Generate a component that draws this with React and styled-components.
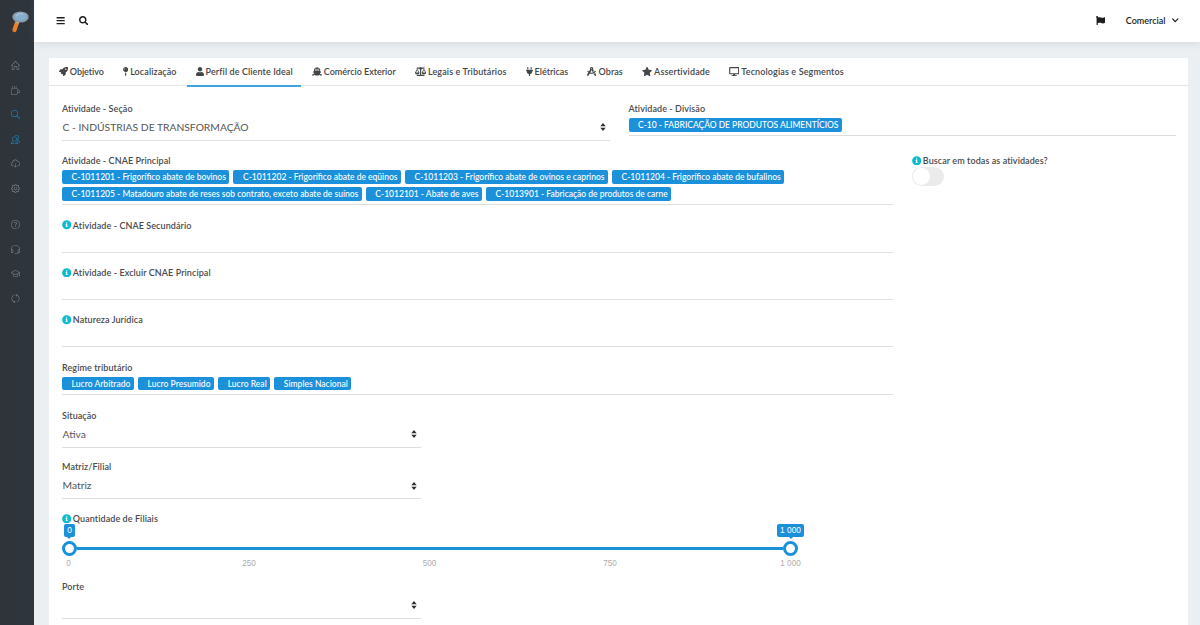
import React from 'react';
import styled, { createGlobalStyle, css } from 'styled-components';
import {
  FaBalanceScale, FaBars, FaDesktop, FaDraftingCompass, FaFlag, FaInfoCircle,
  FaMapPin, FaPlug, FaRocket, FaSearch, FaShip, FaStar, FaUser,
} from 'react-icons/fa';
import {
  SlCloudDownload, SlCup, SlEarphonesAlt, SlGraduation, SlHome, SlMagnifier,
  SlPeople, SlQuestion, SlRefresh, SlSettings,
} from 'react-icons/sl';
import { FiChevronDown } from 'react-icons/fi';

const blue = '#1b91dc';

const Global = createGlobalStyle`
  *, *::before, *::after { box-sizing: border-box; }
  html, body { margin: 0; height: 100%; overflow: hidden; }
  body {
    background: #ebeff2;
    color: #4a4b4d;
    font-family: Lato, "Liberation Sans", sans-serif;
    font-size: 9px;
  }
`;

const Page = styled.div`
  display: flex;
  height: 625px;
  overflow: hidden;
`;

const Sidebar = styled.aside`
  display: flex;
  flex-direction: column;
  align-items: center;
  flex: none;
  width: 34px;
  padding: 11px 3px 0 0;
  background: linear-gradient(90deg, #2f343b, #2e353c);
`;

const Logo = styled.svg`
  width: 20px;
  height: 22px;
  margin: 0 0 28px 6px;
`;

const NavGroup = styled.nav`
  display: flex;
  flex-direction: column;
  gap: 15.6px;
  margin-bottom: 27px;
`;

const NavItem = styled.a`
  display: flex;
  font-size: 9px;
  color: ${(p) => (p.$active ? '#1d90d2' : '#7c8085')};
`;

const Main = styled.main`
  display: flex;
  flex-direction: column;
  flex: 1;
  min-width: 0;
`;

const TopBar = styled.header`
  display: flex;
  align-items: center;
  justify-content: space-between;
  flex: none;
  height: 42px;
  padding: 0 20px 1px 21.5px;
  background: #fff;
  box-shadow: 0 1px 8px rgba(110, 125, 140, 0.2);
  color: #1d1e20;
`;

const TopGroup = styled.div`
  display: flex;
  align-items: center;
  gap: ${(p) => p.$gap}px;
  font-size: 9.3px;
`;

const UserMenu = styled.div`
  display: flex;
  align-items: center;
  gap: 4.5px;
  font-size: 9px;
  font-weight: 600;

  svg { font-size: 10.5px; stroke-width: 2.8; margin-right: -0.5px; }
`;

const Card = styled.section`
  flex: 1;
  margin: 16px 12px 0 15px;
  background: #fff;
`;

const Tabs = styled.div`
  display: flex;
  gap: 2px;
  height: 28px;
  padding-left: 1.3px;
  border-bottom: 1px solid #e3e6e8;
`;

const Tab = styled.div`
  display: flex;
  align-items: center;
  gap: 2px;
  height: 29px;
  padding: 0 8.5px 0.5px;
  border-bottom: 2px solid ${(p) => (p.$active ? '#3ca3dc' : 'transparent')};
  font-weight: 600;
  letter-spacing: ${(p) => p.$tracking}px;
  white-space: nowrap;
  color: #454648;

  svg { flex: none; width: ${(p) => p.$iconWidth}px; height: 9px; }
`;

const Form = styled.div`
  padding: 17px 12px 0 13px;
`;

const Columns = styled.div`
  display: flex;
  gap: 19px;
`;

const Column = styled.div`
  flex: ${(p) => (p.$width ? `0 0 ${p.$width}px` : '1')};
  min-width: 0;
`;

const Field = styled.div`
  display: flex;
  flex-direction: column;
  width: ${(p) => (p.$width ? `${p.$width}px` : 'auto')};
  margin-bottom: ${(p) => p.$after ?? 14}px;
`;

const Label = styled.label`
  display: flex;
  align-items: center;
  gap: 1.8px;
  height: 11px;
  line-height: 11px;
  font-weight: 600;
  letter-spacing: 0.08px;
  white-space: nowrap;

  svg { font-size: 9.4px; margin-left: -0.4px; color: #0bbccf; }
`;

const underline = css`
  border-bottom: 1px solid #dcdee0;
`;

const Select = styled.div`
  ${underline}
  display: flex;
  align-items: center;
  justify-content: space-between;
  height: 27px;
  padding: 0 4px 0 0.5px;
  font-size: 10.3px;
  color: #545557;
`;

const Caret = styled.svg`
  width: 6px;
  height: 8px;
  margin-top: 0.5px;
  fill: #2e2f31;
`;

const TagBox = styled.div`
  ${underline}
  display: flex;
  flex-wrap: wrap;
  align-content: flex-start;
  gap: 3.5px 4px;
  min-height: 22px;
  padding: 4px 0 ${(p) => (p.$empty ? 0 : 3.5)}px;
`;

const Tag = styled.span`
  display: flex;
  align-items: center;
  height: 13.5px;
  padding: 0 3.5px 0 5px;
  border-radius: 2px;
  background: ${blue};
  color: #fff;
  font-size: 8.5px;
  font-weight: 500;
  letter-spacing: ${(p) => p.$tracking}px;
  white-space: nowrap;
`;

const Remove = styled.span`
  width: 4.6px;
  font-size: 6px;
  color: #4a88b4;
`;

const Switch = styled.div`
  width: 32px;
  height: 19px;
  margin-top: 0.5px;
  padding: 1px;
  border-radius: 10px;
  background: #ebebeb;

  &::before {
    content: '';
    display: block;
    width: 17px;
    height: 17px;
    border-radius: 50%;
    background: #fff;
  }
`;

const Slider = styled.div`
  width: 736px;
  height: 43px;
  font-family: "Liberation Sans", sans-serif;
  font-size: 8.4px;
`;

const Ends = styled.div`
  display: flex;
  justify-content: space-between;
`;

const Stop = styled.div`
  display: flex;
  flex-direction: column;
  align-items: center;
  width: 15px;
`;

const Bubble = styled.div`
  height: 13px;
  margin-bottom: 4px;
  padding: 0 3.5px;
  border-radius: 2px;
  background: ${blue};
  color: #fff;
  line-height: 13px;
  white-space: nowrap;

  &::after {
    content: '';
    display: block;
    width: 4px;
    margin: 0 auto;
    border: 2px solid transparent;
    border-top-color: ${blue};
  }
`;

const Knob = styled.div`
  width: 15px;
  height: 15px;
  border: 3px solid ${blue};
  border-radius: 50%;
  background: #fff;
`;

const Track = styled.div`
  flex: 1;
  align-self: flex-end;
  height: 3px;
  margin-bottom: 6px;
  background: ${blue};
`;

const Scale = styled.div`
  display: flex;
  justify-content: space-between;
  padding: 2.5px 7.5px 0 6.5px;
  color: #adadad;
  font-size: 8.2px;
  line-height: 9px;
`;

const Tick = styled.span`
  display: flex;
  justify-content: center;
  width: 0;
  white-space: nowrap;
`;

const tabs = [
  { icon: FaRocket, size: 9, text: 'Objetivo', tracking: -0.05 },
  { icon: FaMapPin, size: 5.3, text: 'Localização', tracking: 0.1 },
  { icon: FaUser, size: 8, text: 'Perfil de Cliente Ideal', tracking: 0.1, active: true },
  { icon: FaShip, size: 10.2, text: 'Comércio Exterior', tracking: -0.02 },
  { icon: FaBalanceScale, size: 11.2, text: 'Legais e Tributários', tracking: 0.13 },
  { icon: FaPlug, size: 7, text: 'Elétricas', tracking: 0 },
  { icon: FaDraftingCompass, size: 9.2, text: 'Obras', tracking: 0.1 },
  { icon: FaStar, size: 10.2, text: 'Assertividade', tracking: 0.14 },
  { icon: FaDesktop, size: 10.4, text: 'Tecnologias e Segmentos', tracking: 0.13 },
];

const mainNav = [
  { icon: SlHome },
  { icon: SlCup },
  { icon: SlMagnifier, active: true },
  { icon: SlPeople, active: true },
  { icon: SlCloudDownload },
  { icon: SlSettings },
];
const helpNav = [
  { icon: SlQuestion },
  { icon: SlEarphonesAlt },
  { icon: SlGraduation },
  { icon: SlRefresh },
];

const principal = [
  'C-1011201 - Frigorífico abate de bovinos',
  'C-1011202 - Frigorífico abate de eqüinos',
  'C-1011203 - Frigorífico abate de ovinos e caprinos',
  'C-1011204 - Frigorífico abate de bufalinos',
  'C-1011205 - Matadouro abate de reses sob contrato, exceto abate de suínos',
  'C-1012101 - Abate de aves',
  'C-1013901 - Fabricação de produtos de carne',
];

function Nav({ items }) {
  return (
    <NavGroup>
      {items.map(({ icon: Icon, active }, i) => (
        <NavItem key={i} $active={active}><Icon /></NavItem>
      ))}
    </NavGroup>
  );
}

function SelectField({ label, value, width, after }) {
  return (
    <Field $width={width} $after={after}>
      <Label>{label}</Label>
      <Select>
        <span>{value}</span>
        <Caret viewBox="0 0 6 8">
          <path d="M3 0 5.7 3.2H.3zM3 8 .3 4.8h5.4z" />
        </Caret>
      </Select>
    </Field>
  );
}

function TagField({ label, info, tags = [], tracking = 0, after }) {
  return (
    <Field $after={after}>
      <Label>{info && <FaInfoCircle />}{label}</Label>
      <TagBox $empty={!tags.length}>
        {tags.map((t) => (
          <Tag key={t} $tracking={tracking}><Remove>×</Remove>{t}</Tag>
        ))}
      </TagBox>
    </Field>
  );
}

export default function App() {
  return (
    <Page>
      <Global />
      <Sidebar>
        <Logo viewBox="0 0 20 22">
          <path d="M8 11.5 5.5 19" stroke="#e8812a" strokeWidth="4.2" strokeLinecap="round" />
          <path d="M9.4 9.5 8 12.5" stroke="#b9a894" strokeWidth="3" />
          <ellipse cx="11.5" cy="6" rx="8.2" ry="5.6" fill="#8b9ba8" />
          <ellipse cx="11.6" cy="5.8" rx="6.2" ry="3.8" fill="#86b0cf" />
          <path d="M7 5.2c1-2 4-3 7-2.3" stroke="#a9c4d6" strokeWidth="1.2" fill="none" />
        </Logo>
        <Nav items={mainNav} />
        <Nav items={helpNav} />
      </Sidebar>
      <Main>
        <TopBar>
          <TopGroup $gap={14}><FaBars /><FaSearch /></TopGroup>
          <TopGroup $gap={20.5}>
            <FaFlag />
            <UserMenu>Comercial<FiChevronDown /></UserMenu>
          </TopGroup>
        </TopBar>
        <Card>
          <Tabs>
            {tabs.map(({ icon: Icon, size, text, tracking, active }) => (
              <Tab key={text} $iconWidth={size} $tracking={tracking} $active={active}>
                <Icon />{text}
              </Tab>
            ))}
          </Tabs>
          <Form>
            <Columns>
              <Column>
                <SelectField label="Atividade - Seção" value="C - INDÚSTRIAS DE TRANSFORMAÇÃO" />
              </Column>
              <Column>
                <TagField
                  label="Atividade - Divisão"
                  tags={['C-10 - FABRICAÇÃO DE PRODUTOS ALIMENTÍCIOS']}
                  tracking={-0.03}
                />
              </Column>
            </Columns>
            <Columns>
              <Column $width={831}>
                <TagField label="Atividade - CNAE Principal" tags={principal} after={14.5} />
                <TagField label="Atividade - CNAE Secundário" info after={14.45} />
                <TagField label="Atividade - Excluir CNAE Principal" info after={14.45} />
                <TagField label="Natureza Jurídica" info after={14.5} />
                <TagField
                  label="Regime tributário"
                  tags={['Lucro Arbitrado', 'Lucro Presumido', 'Lucro Real', 'Simples Nacional']}
                  tracking={0.03}
                  after={14.8}
                />
                <SelectField label="Situação" value="Ativa" width={359} after={13.8} />
                <SelectField label="Matriz/Filial" value="Matriz" width={359} after={13.8} />
                <Field $after={13.7}>
                  <Label><FaInfoCircle />Quantidade de Filiais</Label>
                  <Slider>
                    <Ends>
                      <Stop><Bubble>0</Bubble><Knob /></Stop>
                      <Track />
                      <Stop><Bubble>1 000</Bubble><Knob /></Stop>
                    </Ends>
                    <Scale>
                      {['0', '250', '500', '750', '1 000'].map((t) => <Tick key={t}>{t}</Tick>)}
                    </Scale>
                  </Slider>
                </Field>
                <SelectField label="Porte" value="" width={359} />
              </Column>
              <Column>
                <Label><FaInfoCircle />Buscar em todas as atividades?</Label>
                <Switch />
              </Column>
            </Columns>
          </Form>
        </Card>
      </Main>
    </Page>
  );
}
